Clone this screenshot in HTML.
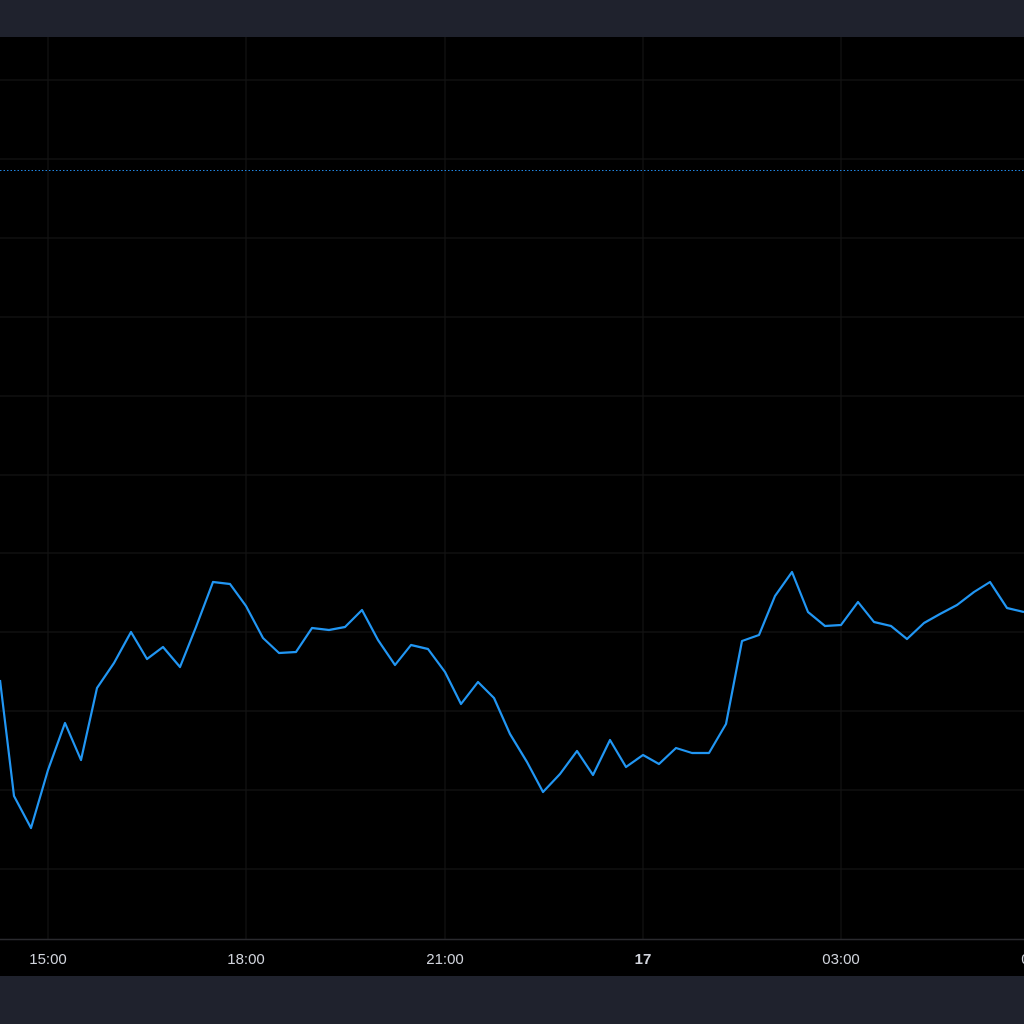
<!DOCTYPE html>
<html><head><style>
body{margin:0;width:1024px;height:1024px;background:#000;overflow:hidden;font-family:"Liberation Sans",sans-serif}
.top{position:absolute;left:0;top:0;width:1024px;height:37px;background:#1f222d}
.bot{position:absolute;left:0;top:976px;width:1024px;height:48px;background:#1f222d}
.lbl{position:absolute;top:951px;color:#d1d4dc;font-size:15px;transform:translateX(-50%)}
</style></head><body>
<div class="top"></div>
<svg width="1024" height="1024" style="position:absolute;left:0;top:0">
<g stroke="#131313" stroke-width="1.2">
<line x1="0" y1="80" x2="1024" y2="80"/><line x1="0" y1="159" x2="1024" y2="159"/>
<line x1="0" y1="238" x2="1024" y2="238"/><line x1="0" y1="317" x2="1024" y2="317"/>
<line x1="0" y1="396" x2="1024" y2="396"/><line x1="0" y1="475" x2="1024" y2="475"/>
<line x1="0" y1="553" x2="1024" y2="553"/><line x1="0" y1="632" x2="1024" y2="632"/>
<line x1="0" y1="711" x2="1024" y2="711"/><line x1="0" y1="790" x2="1024" y2="790"/>
<line x1="0" y1="869" x2="1024" y2="869"/>
<line x1="48" y1="37" x2="48" y2="939"/><line x1="246" y1="37" x2="246" y2="939"/>
<line x1="445" y1="37" x2="445" y2="939"/><line x1="643" y1="37" x2="643" y2="939"/>
<line x1="841" y1="37" x2="841" y2="939"/>
</g>
<line x1="0" y1="939.5" x2="1024" y2="939.5" stroke="#2a2a2e" stroke-width="1.5"/>
<line x1="0" y1="170.5" x2="1024" y2="170.5" stroke="#2184e0" stroke-width="1" stroke-dasharray="1.5 2"/>
<polyline fill="none" stroke="#2196f3" stroke-width="2.2" stroke-linejoin="round" points="0,680 14,796 31,828 48,770 65,723 81,760 97,688 114,663 131,632 147,659 163,647 180,667 196,627 213,582 230,584 246,606 263,638 279,653 296,652 312,628 329,630 345,627 362,610 378,640 395,665 411,645 428,649 445,672 461,704 478,682 494,698 510,734 527,762 543,792 560,774 577,751 593,775 610,740 626,767 643,755 659,764 676,748 692,753 709,753 726,724 742,641 759,635 775,596 792,572 808,612 825,626 841,625 858,602 874,622 891,626 907,639 924,623 940,614 957,605 974,592 990,582 1007,608 1024,612"/>
</svg>
<div class="lbl" style="left:48px">15:00</div>
<div class="lbl" style="left:246px">18:00</div>
<div class="lbl" style="left:445px">21:00</div>
<div class="lbl" style="left:643px;font-weight:bold">17</div>
<div class="lbl" style="left:841px">03:00</div>
<div class="lbl" style="left:1040px">06:00</div>
<div class="bot"></div>
</body></html>
